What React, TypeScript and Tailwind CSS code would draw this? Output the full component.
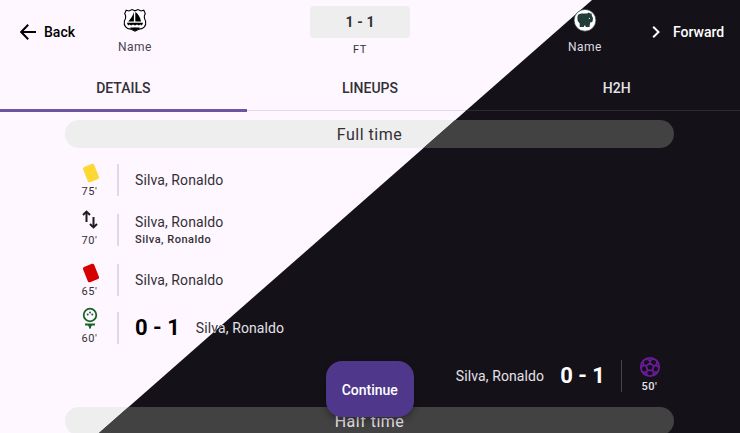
import type { ReactNode } from "react";

type Theme = {
  surface: string;
  nav: string;
  text: string;
  muted: string;
  pill: string;
  rule: string;
  tabRule: string;
  score: string;
};

const light: Theme = {
  surface: "bg-[#fef7ff]",
  nav: "text-black",
  text: "text-[#323035]",
  muted: "text-[#49454f]",
  pill: "bg-[#eeeeee]",
  rule: "bg-[#e0d9e3]",
  tabRule: "bg-[#e3dce7]",
  score: "text-black",
};

const dark: Theme = {
  surface: "bg-[#141218]",
  nav: "text-white",
  text: "text-[#e6e1e9]",
  muted: "text-[#dedbe0]",
  pill: "bg-[#424242]",
  rule: "bg-[#49464e]",
  tabRule: "bg-[#2d2a32]",
  score: "text-white",
};

function ShipCrest() {
  return (
    <svg className="h-[26px] w-[26px]" viewBox="0 0 26 26" fill="none">
      <path d="M4.2 2.2 7 3 10 1.6 13 2.8 16 1.6 19 3 21.8 2.2 23.3 5.6C21.4 8.3 21.9 10 23.6 13 24.6 18.2 21.5 20.6 17.2 21.1L13 23.2 8.8 21.1C4.5 20.6 1.4 18.2 2.4 13 4.1 10 4.6 8.3 2.7 5.6Z" fill="white" stroke="black" strokeWidth="1.1" />
      <path d="M11.9 4V13.6H6.2C8.7 10.9 10.7 7.7 11.9 4ZM13.3 4C16 5.8 18.2 8.8 19.1 13.6H13.3Z" fill="black" />
      <path d="M4.9 14.8H21.1L19.9 17.5 18.4 16.5 16.8 17.6 15 16.6 13 17.6 11 16.6 9.2 17.6 7.6 16.5 6.1 17.5Z" fill="black" />
      <path d="M7.6 20.1C10 19 11.5 19.9 13 19.3 14.5 19.9 16 19 18.4 20.1L13 22.9Z" fill="black" />
    </svg>
  );
}

function AnimalCrest() {
  return (
    <svg className="h-[26px] w-[26px]" viewBox="0 0 26 26">
      <circle cx="13" cy="12.3" r="10.9" fill="white" stroke="#263e38" strokeWidth=".7" />
      <path d="M6.7 6.3C9 4.8 12 5.6 14.2 5.6L15.6 5.2 16.7 4.6 18.3 5.4 19.6 5.4 19.8 7.6 21 10.2 20.6 13.6 19 14.4 18.2 14.2 17.5 18.9H13.8L13.3 17.4H12.2L11.8 18.9H7.7V15.6L5.7 13C5.2 9.8 5.3 7.5 6.7 6.3Z" fill="#223d37" />
      <circle cx="17.4" cy="10.3" r=".65" fill="white" />
    </svg>
  );
}

function Card({ color }: { color: string }) {
  return (
    <svg className="mt-[3px] ml-[3px] h-5 w-5" viewBox="0 0 20 20">
      <rect x="4" y="1.8" width="12" height="16.4" rx="1.8" transform="rotate(-22 10 10)" fill={color} />
    </svg>
  );
}

function Substitution() {
  return (
    <svg className="h-5 w-5" viewBox="0 0 20 20" fill="none" stroke="#1c1b1f" strokeWidth="2">
      <path d="M6.5 12V2.5M13.5 7V16.5" />
      <path d="M3 5 6.5 1.6 10 5M10 14 13.5 17.4 17 14" />
    </svg>
  );
}

function GolfBall() {
  return (
    <svg className="h-6 w-5" viewBox="0 0 20 24" fill="#1b6427">
      <circle cx="10" cy="9" r="6.3" fill="none" stroke="#1b6427" strokeWidth="1.8" />
      <circle cx="10" cy="6.6" r="1" />
      <circle cx="7.7" cy="8.4" r="1" />
      <circle cx="12.3" cy="8.4" r="1" />
      <path d="M5 17.5H15V19.4H12.3L11 20.7V22.4H9V20.7L7.7 19.4H5Z" />
    </svg>
  );
}

function SoccerBall() {
  return (
    <svg className="mt-px h-6 w-6" viewBox="0 0 24 24" fill="none" stroke="#6a1b9a" strokeWidth="1.8" strokeLinejoin="round">
      <circle cx="12" cy="12" r="9.2" />
      <path d="M12 8.1 15.8 10.9 14.4 15.3H9.6L8.2 10.9Z" />
      <path d="M12 8.1V5.7L8.2 3.5M12 5.7 15.8 3.5M15.8 10.9 18.3 10.1 19.3 6.2M18.3 10.1 21.2 12.7M14.4 15.3 15.9 17.4 20 17.1M15.9 17.4 14.5 21M9.6 15.3 8.1 17.4 4 17.1M8.1 17.4 9.5 21M8.2 10.9 5.7 10.1 4.7 6.2M5.7 10.1 2.8 12.7" />
    </svg>
  );
}

function Team({ theme, children }: { theme: Theme; children: ReactNode }) {
  return (
    <div className="flex w-20 flex-col items-center pt-2">
      {children}
      <span className={`mt-[5px] text-xs leading-4 tracking-[0.5px] ${theme.muted}`}>Name</span>
    </div>
  );
}

function SectionPill({ theme, label }: { theme: Theme; label: string }) {
  return (
    <div className={`flex h-7 shrink-0 items-center justify-center rounded-full pt-px text-base tracking-[0.5px] ${theme.pill} ${theme.text}`}>
      {label}
    </div>
  );
}

type EventProps = {
  theme: Theme;
  icon: ReactNode;
  minute: string;
  second?: string;
  score?: string;
  away?: boolean;
  card?: boolean;
};

function MatchEvent({ theme, icon, minute, second, score, away, card }: EventProps) {
  return (
    <div className={`flex h-8 shrink-0 items-center ${away ? "flex-row-reverse" : ""}`}>
      <div className={`flex w-[49px] shrink-0 flex-col items-center ${card ? "pt-px" : "pb-px"} ${theme.text}`}>
        <div className="flex h-5 items-center justify-center">{icon}</div>
        <span className={`mt-[3px] text-[11px] leading-4 tracking-[0.5px] ${away ? "font-medium" : "font-normal"}`}>{minute}</span>
      </div>
      <div className={`h-8 ${away ? "mr-[3px] w-px" : "ml-[3px] w-0.5"} ${theme.rule}`} />
      {score && (
        <span className={`text-[22px] leading-7 font-bold ${away ? "mr-4" : "ml-4"} ${theme.score}`}>{score}</span>
      )}
      <div className={`flex flex-col ${away ? "mr-4" : "ml-4"} ${theme.text}`}>
        <span className="text-sm leading-5 tracking-[0.1px]">Silva, Ronaldo</span>
        {second && <span className="text-[11px] leading-4 font-medium tracking-[0.5px]">{second}</span>}
      </div>
    </div>
  );
}

function MatchScreen({ theme }: { theme: Theme }) {
  return (
    <div className={`flex h-[433px] w-[740px] flex-col overflow-hidden font-['Roboto',sans-serif] ${theme.surface}`}>
      <header className="flex h-16 shrink-0">
        <div className={`flex w-[95px] items-center gap-2 pl-5 text-sm font-medium ${theme.nav}`}>
          <svg className="h-4 w-4" viewBox="0 0 16 16" fill="none" stroke="currentColor" strokeWidth="2">
            <path d="M8.2 .8 1.2 8 8.2 15.2M1.2 8H16" />
          </svg>
          Back
        </div>
        <Team theme={theme}><ShipCrest /></Team>
        <div className="flex w-[370px] flex-col items-center pt-1.5">
          <div className={`flex h-8 w-[100px] items-center justify-center rounded text-sm font-bold tracking-[0.1px] ${theme.pill} ${theme.text}`}>1 - 1</div>
          <span className={`mt-1 text-[11px] leading-4 tracking-[0.7px] ${theme.text}`}>FT</span>
        </div>
        <Team theme={theme}><AnimalCrest /></Team>
        <div className={`flex flex-1 items-center pl-[27px] text-sm font-medium ${theme.nav}`}>
          <svg className="mr-[13px] h-4 w-2" viewBox="0 0 8 16" fill="none" stroke="currentColor" strokeWidth="2">
            <path d="M1.2 2.7 6.5 8 1.2 13.3" />
          </svg>
          Forward
        </div>
      </header>
      <nav className={`flex h-12 shrink-0 flex-col text-sm font-medium ${theme.text}`}>
        <div className="grid h-[45px] grid-cols-3 pt-[3px] text-center leading-[42px]">
          <span>DETAILS</span>
          <span>LINEUPS</span>
          <span>H2H</span>
        </div>
        <div className="flex h-[3px] items-end">
          <div className="h-[3px] w-[246.5px] bg-[#6b55a3]" />
          <div className={`mb-px h-px flex-1 ${theme.tabRule}`} />
        </div>
      </nav>
      <main className="flex flex-1 flex-col pt-2 pr-[66px] pl-[65px]">
        <SectionPill theme={theme} label="Full time" />
        <div className="flex shrink-0 flex-col pt-4 pb-[15px]">
          <MatchEvent theme={theme} icon={<Card color="#fdd835" />} minute="75'" card />
          <div className="h-[18px]" />
          <MatchEvent theme={theme} icon={<Substitution />} minute="70'" second="Silva, Ronaldo" />
          <div className="h-[18px]" />
          <MatchEvent theme={theme} icon={<Card color="#d50000" />} minute="65'" card />
          <div className="h-4" />
          <MatchEvent theme={theme} icon={<GolfBall />} minute="60'" score="0 - 1" />
          <div className="h-4" />
          <MatchEvent theme={theme} icon={<SoccerBall />} minute="50'" score="0 - 1" away />
        </div>
        <SectionPill theme={theme} label="Half time" />
      </main>
    </div>
  );
}

export default function App() {
  return (
    <div className="relative h-[433px] w-[740px] overflow-hidden">
      <MatchScreen theme={light} />
      <div className="absolute inset-0 [clip-path:polygon(592px_0,740px_0,740px_433px,99px_433px)]">
        <MatchScreen theme={dark} />
      </div>
      <button className="absolute top-[361px] left-[325.5px] h-14 w-[88.5px] rounded-2xl bg-[#4f378b] pt-px font-['Roboto',sans-serif] text-sm font-medium text-white shadow-[0_3px_6px_rgba(0,0,0,0.35)]">
        Continue
      </button>
    </div>
  );
}
